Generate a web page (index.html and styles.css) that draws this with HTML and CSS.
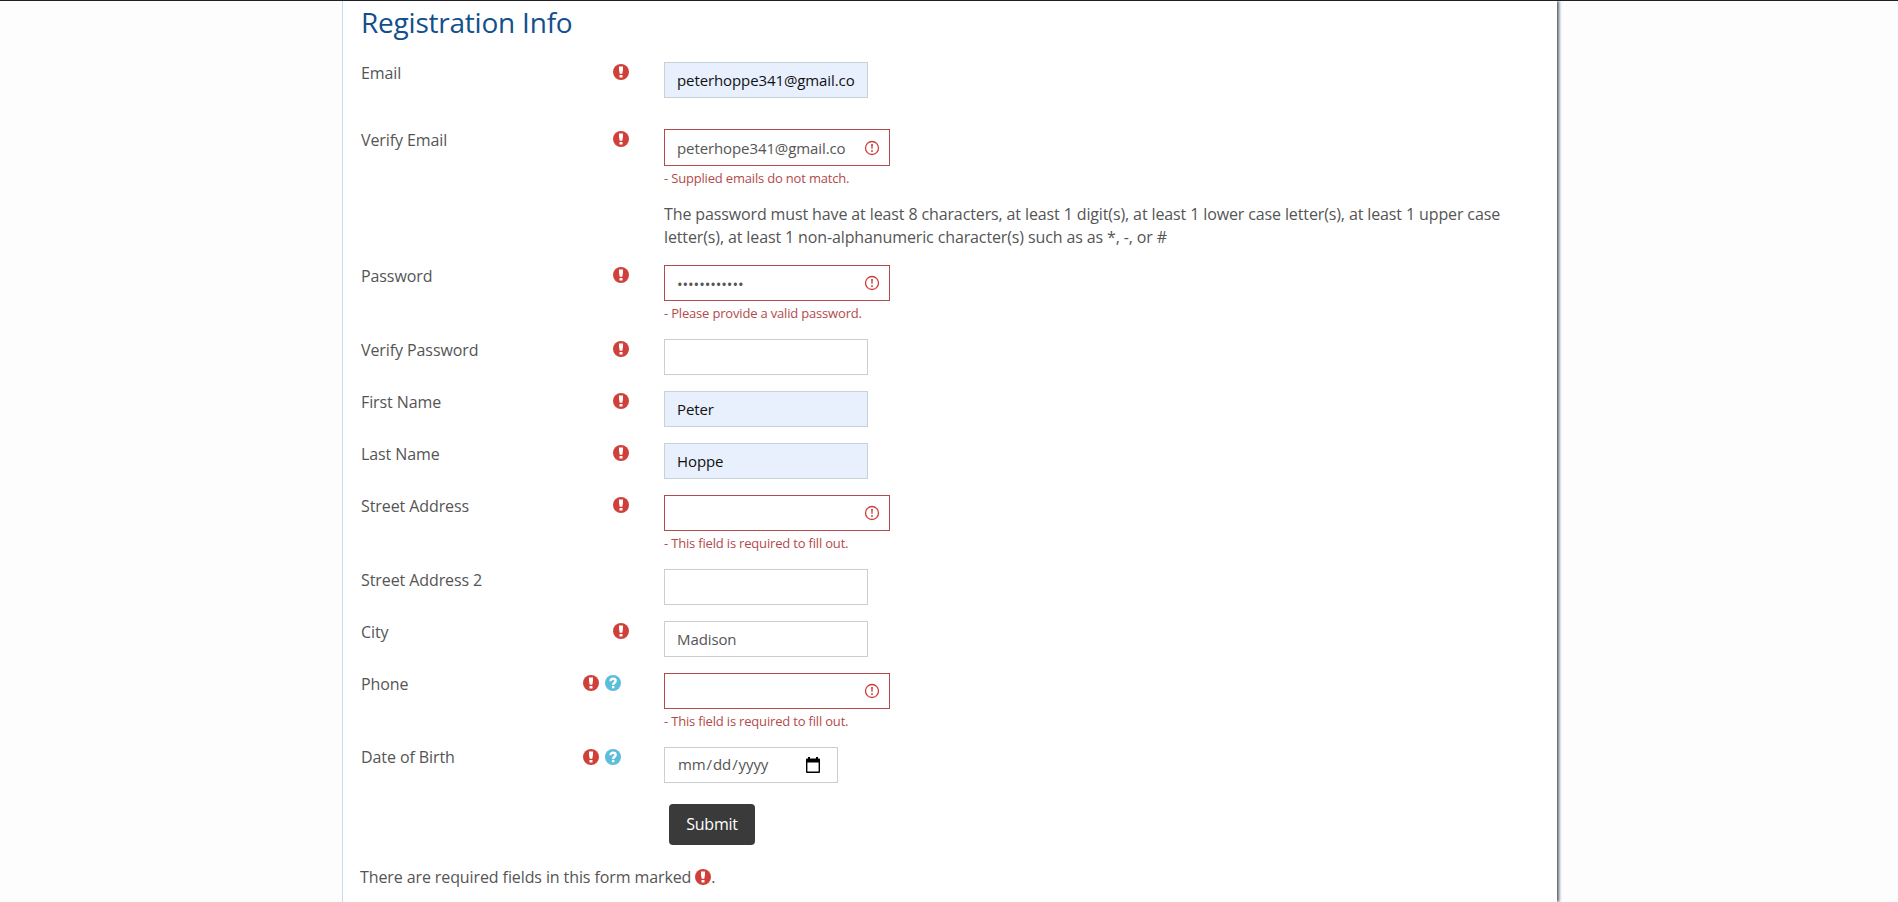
FILE: index.html
```
<!DOCTYPE html>
<html lang="en">
<head>
<meta charset="utf-8">
<title>Registration Info</title>
<link rel="stylesheet" href="styles.css">
</head>
<body>
<svg class="defs" width="0" height="0" aria-hidden="true">
  <symbol id="required" viewBox="0 0 16 16"><circle cx="8" cy="8" r="8" fill="#d0403b"/><path d="M6 2.600h4v3.200L9.300 9.700H6.700L6 5.800z M6.500 10.900h3v2.700H6.500z" fill="#fff"/></symbol>
  <symbol id="help" viewBox="0 0 16 16"><circle cx="8" cy="8" r="8" fill="#5bbcdc"/><path d="M5.500 6.200C5.500 4.500 6.500 3.800 8 3.800S10.600 4.600 10.600 5.900C10.600 7.800 8.100 7.600 8.100 9.900" fill="none" stroke="#fff" stroke-width="2.400"/><path d="M6.900 10.900h2.500v2.400H6.900z" fill="#fff"/></symbol>
  <symbol id="invalid" viewBox="0 0 16 16"><circle cx="8" cy="8" r="6.500" fill="none" stroke="#cb403c" stroke-width="1.300"/><path d="M7.100 3.900h1.800L8.500 9H7.500z" fill="#cb403c"/><circle cx="8" cy="11" r=".95" fill="#cb403c"/></symbol>
</svg>
<main class="panel">
  <h1 class="title">Registration Info</h1>
  <form class="form">
    <div class="row row-email"><label class="label">Email</label><span class="marks"><svg class="mark"><use href="#required"/></svg></span><div class="field"><input class="input filled" value="peterhoppe341@gmail.co"></div></div>
    <div class="row row-error"><label class="label">Verify Email</label><span class="marks"><svg class="mark"><use href="#required"/></svg></span><div class="field invalid tall"><input class="input" value="peterhope341@gmail.co"><svg class="alert"><use href="#invalid"/></svg><p class="error">- Supplied emails do not match.</p></div></div>
    <p class="note">The password must have at least 8 characters, at least 1 digit(s), at least 1 lower case letter(s), at least 1 upper case<br>letter(s), at least 1 non-alphanumeric character(s) such as as *, -, or #</p>
    <div class="row row-error"><label class="label">Password</label><span class="marks"><svg class="mark"><use href="#required"/></svg></span><div class="field invalid"><input class="input password" value="••••••••••••"><svg class="alert"><use href="#invalid"/></svg><p class="error">- Please provide a valid password.</p></div></div>
    <div class="row"><label class="label">Verify Password</label><span class="marks"><svg class="mark"><use href="#required"/></svg></span><div class="field"><input class="input"></div></div>
    <div class="row"><label class="label">First Name</label><span class="marks"><svg class="mark"><use href="#required"/></svg></span><div class="field"><input class="input filled" value="Peter"></div></div>
    <div class="row"><label class="label">Last Name</label><span class="marks"><svg class="mark"><use href="#required"/></svg></span><div class="field"><input class="input filled" value="Hoppe"></div></div>
    <div class="row row-error"><label class="label">Street Address</label><span class="marks"><svg class="mark"><use href="#required"/></svg></span><div class="field invalid"><input class="input"><svg class="alert"><use href="#invalid"/></svg><p class="error">- This field is required to fill out.</p></div></div>
    <div class="row"><label class="label">Street Address 2</label><span class="marks"></span><div class="field"><input class="input"></div></div>
    <div class="row"><label class="label">City</label><span class="marks"><svg class="mark"><use href="#required"/></svg></span><div class="field"><input class="input" value="Madison"></div></div>
    <div class="row row-error"><label class="label">Phone</label><span class="marks pair"><svg class="mark"><use href="#required"/></svg><svg class="mark"><use href="#help"/></svg></span><div class="field invalid"><input class="input"><svg class="alert"><use href="#invalid"/></svg><p class="error">- This field is required to fill out.</p></div></div>
    <div class="row row-date"><label class="label">Date of Birth</label><span class="marks pair"><svg class="mark"><use href="#required"/></svg><svg class="mark"><use href="#help"/></svg></span><div class="field"><div class="date"><span class="date-text"><span>mm</span><span>/</span><span>dd</span><span>/</span><span>yyyy</span></span><svg class="calendar" viewBox="0 0 14 16"><path d="M2 0h2v1.500h6V0h2v1.500h1a1 1 0 0 1 1 1V15a1 1 0 0 1-1 1H1a1 1 0 0 1-1-1V2.500a1 1 0 0 1 1-1h1zM1.400 5.500v9.100h11.200V5.500z" fill="#000" fill-rule="evenodd"/></svg></div></div></div>
    <button class="submit" type="button">Submit</button>
  </form>
  <p class="legend">There are required fields in this form marked <svg class="mark legend-mark"><use href="#required"/></svg>.</p>
</main>
</body>
</html>
```
FILE: styles.css
```
* { box-sizing: border-box; }
body {
  margin: 0;
  height: 902px;
  overflow: hidden;
  background: #fdfdfd;
  border-top: 1px solid #211f24;
  font-family: "Open Sans", sans-serif;
  font-size: 16px;
  line-height: 23px;
  color: #555;
}
.defs { position: absolute; }
.panel {
  width: 1215px;
  height: 901px;
  margin-left: 342px;
  padding-left: 18px;
  background: #fff;
  border-left: 1px solid #c9dde8;
  box-shadow: 2px 0 3px #4c5c68;
  clip-path: inset(0 -8px 0 0);
}
.title {
  height: 61px;
  margin: 0;
  padding-top: 3px;
  font-size: 28px;
  font-weight: 400;
  line-height: 36px;
  letter-spacing: -0.22px;
  color: #124f8c;
}
.row {
  display: grid;
  grid-template-columns: 220px 83px 1fr;
  height: 52px;
}
.row-email { height: 67px; }
.row-error { height: 74px; }
.row-date { height: 57px; }
.label {
  line-height: 22px;
  letter-spacing: -0.09px;
}
.row-date .label { line-height: 20px; }
.marks {
  display: flex;
  justify-content: flex-start;
  gap: 6px;
  padding: 2px 0 0 32px;
}
.pair { padding-left: 2px; }
.mark {
  display: block;
  flex: none;
  width: 16px;
  height: 16px;
}
.field {
  position: relative;
  width: 204px;
}
.invalid { width: 226px; }
.input, .date {
  display: block;
  width: 100%;
  height: 36px;
  margin: 0;
  padding: 0 12px 1px;
  border: 1px solid #c9ced2;
  border-radius: 0;
  background: #fff;
  color: #555;
  font: 15px/33px "Open Sans", sans-serif;
  letter-spacing: -0.1px;
}
.filled {
  background: #e8f0fe;
  border-color: #c8d0da;
  color: #111;
}
.invalid .input { border-color: #b34a4c; }
.invalid .password { padding: 1px 12px 0; }
.tall .input {
  height: 37px;
  padding: 1px 12px 0;
}
.alert {
  position: absolute;
  top: 10px;
  right: 10px;
  width: 16px;
  height: 16px;
}
.tall .alert { top: 11px; }
.error {
  margin: 1px 0 0;
  font-size: 13px;
  line-height: 22px;
  letter-spacing: -0.18px;
  color: #b34a4c;
  white-space: nowrap;
}
.note {
  height: 62px;
  margin: 0 0 0 303px;
  letter-spacing: -0.122px;
  white-space: nowrap;
}
.date {
  display: flex;
  width: 174px;
  align-items: center;
  justify-content: space-between;
  padding: 0 17px 0 13px;
}
.date-text {
  display: flex;
  gap: 1px;
  padding-bottom: 1px;
}
.calendar { width: 14px; height: 16px; }
.submit {
  display: block;
  width: 86px;
  height: 41px;
  margin: 0 0 0 308px;
  padding: 0 0 2px;
  border: 0;
  border-radius: 4px;
  background: #3a3a3a;
  color: #fff;
  font: 16px "Open Sans", sans-serif;
  letter-spacing: -0.2px;
}
.legend {
  display: flex;
  align-items: center;
  margin: 21px 0 0 -1px;
  letter-spacing: -0.1px;
  white-space: pre;
}
.legend-mark { margin-top: -2px; }
```
